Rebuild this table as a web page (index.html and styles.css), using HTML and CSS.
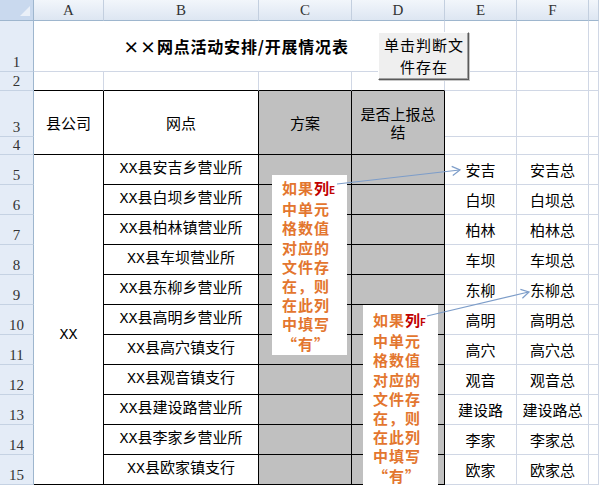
FILE: index.html
```html
<!DOCTYPE html>
<html lang="zh-CN">
<head>
<meta charset="utf-8">
<title>××网点活动安排/开展情况表</title>
<link rel="stylesheet" href="styles.css">
</head>
<body>
<div class="sheet">
  <table class="grid">
    <colgroup>
      <col class="c-rh"><col class="c-a"><col class="c-b"><col class="c-c"><col class="c-d"><col class="c-e"><col class="c-f"><col class="c-g">
    </colgroup>
    <tr class="r-hdr">
      <th class="corner"><span class="tri"></span></th>
      <th class="ch">A</th><th class="ch">B</th><th class="ch">C</th><th class="ch">D</th><th class="ch">E</th><th class="ch">F</th><th class="ch"></th>
    </tr>
    <tr class="r1">
      <th class="rh">1</th>
      <td colspan="4" class="title">××网点活动安排/开展情况表</td>
      <td></td><td></td><td></td>
    </tr>
    <tr class="r2">
      <th class="rh">2</th>
      <td class="bb"></td><td class="bb"></td><td class="bb"></td><td class="bb"></td>
      <td></td><td></td><td></td>
    </tr>
    <tr class="r3">
      <th class="rh">3</th>
      <td rowspan="2" class="box">县公司</td>
      <td rowspan="2" class="box">网点</td>
      <td rowspan="2" class="box gray">方案</td>
      <td rowspan="2" class="box gray wrap">是否上报总结</td>
      <td></td><td></td><td></td>
    </tr>
    <tr class="r4">
      <th class="rh">4</th>
      <td></td><td></td><td></td>
    </tr>
    <tr class="r">
      <th class="rh">5</th>
      <td rowspan="11" class="box mono county">XX</td>
      <td class="box mono">XX县安吉乡营业所</td><td class="box gray"></td><td class="box gray"></td>
      <td>安吉</td><td>安吉总</td><td></td>
    </tr>
    <tr class="r">
      <th class="rh">6</th>
      <td class="box mono">XX县白坝乡营业所</td><td class="box gray"></td><td class="box gray"></td>
      <td>白坝</td><td>白坝总</td><td></td>
    </tr>
    <tr class="r">
      <th class="rh">7</th>
      <td class="box mono">XX县柏林镇营业所</td><td class="box gray"></td><td class="box gray"></td>
      <td>柏林</td><td>柏林总</td><td></td>
    </tr>
    <tr class="r">
      <th class="rh">8</th>
      <td class="box mono">XX县车坝营业所</td><td class="box gray"></td><td class="box gray"></td>
      <td>车坝</td><td>车坝总</td><td></td>
    </tr>
    <tr class="r">
      <th class="rh">9</th>
      <td class="box mono">XX县东柳乡营业所</td><td class="box gray"></td><td class="box gray"></td>
      <td>东柳</td><td>东柳总</td><td></td>
    </tr>
    <tr class="r">
      <th class="rh">10</th>
      <td class="box mono">XX县高明乡营业所</td><td class="box gray"></td><td class="box gray"></td>
      <td>高明</td><td>高明总</td><td></td>
    </tr>
    <tr class="r">
      <th class="rh">11</th>
      <td class="box mono">XX县高穴镇支行</td><td class="box gray"></td><td class="box gray"></td>
      <td>高穴</td><td>高穴总</td><td></td>
    </tr>
    <tr class="r">
      <th class="rh">12</th>
      <td class="box mono">XX县观音镇支行</td><td class="box gray"></td><td class="box gray"></td>
      <td>观音</td><td>观音总</td><td></td>
    </tr>
    <tr class="r">
      <th class="rh">13</th>
      <td class="box mono">XX县建设路营业所</td><td class="box gray"></td><td class="box gray"></td>
      <td>建设路</td><td>建设路总</td><td></td>
    </tr>
    <tr class="r">
      <th class="rh">14</th>
      <td class="box mono">XX县李家乡营业所</td><td class="box gray"></td><td class="box gray"></td>
      <td>李家</td><td>李家总</td><td></td>
    </tr>
    <tr class="r">
      <th class="rh">15</th>
      <td class="box mono">XX县欧家镇支行</td><td class="box gray"></td><td class="box gray"></td>
      <td>欧家</td><td>欧家总</td><td></td>
    </tr>
  </table>

  <button class="btn" type="button">单击判断文<br>件存在</button>

  <div class="note note-e">如果<span class="key">列<small>E</small></span><br>中单元<br>格数值<br>对应的<br>文件存<br>在，则<br>在此列<br>中填写<br>“有”</div>
  <div class="note note-f">如果<span class="key">列<small>F</small></span><br>中单元<br>格数值<br>对应的<br>文件存<br>在，则<br>在此列<br>中填写<br>“有”</div>

  <svg class="arrows" width="599" height="485" viewBox="0 0 599 485">
    <line x1="337" y1="184" x2="459.5" y2="170" />
    <polyline points="452.8,175.4 460,170 451.7,166.4" />
    <line x1="427" y1="316" x2="528.5" y2="292" />
    <polyline points="522.4,298.2 529,292 520.4,289.4" />
  </svg>
</div>
</body>
</html>
```
FILE: styles.css
```css
* { box-sizing: border-box; }
html, body { margin: 0; padding: 0; }
body {
  width: 599px;
  height: 485px;
  overflow: hidden;
  background: #fff;
  font-family: "Noto Sans CJK SC", sans-serif;
  color: #000;
}
.sheet {
  position: relative;
  width: 599px;
  height: 485px;
  overflow: hidden;
}
.grid {
  border-collapse: separate;
  border-spacing: 0;
  table-layout: fixed;
  width: 599px;
}
.c-rh { width: 34px; }
.c-a { width: 70px; }
.c-b { width: 155px; }
.c-c { width: 93px; }
.c-d { width: 93px; }
.c-e { width: 72px; }
.c-f { width: 72px; }
.c-g { width: 10px; }

.grid td, .grid th {
  padding: 0;
  border-right: 1px solid #d0d7e5;
  border-bottom: 1px solid #d0d7e5;
  font-weight: normal;
  text-align: center;
  vertical-align: middle;
  white-space: nowrap;
  overflow: hidden;
  font-size: 15px;
  line-height: 18px;
}
.r-hdr { height: 21px; }
.r1 { height: 51px; }
.r2 { height: 19px; }
.r3 { height: 46px; }
.r4 { height: 18px; }
.r { height: 30px; }

.grid .corner {
  position: relative;
  background: #c9d9ee;
  border-right-color: #9eb6ce;
  border-bottom-color: #9eb6ce;
}
.tri {
  position: absolute;
  right: 3px;
  bottom: 4px;
  width: 0;
  height: 0;
  border-left: 10px solid transparent;
  border-bottom: 10px solid #eaf0f8;
}
.grid .ch {
  background: linear-gradient(#f2f6fb, #dde6f2);
  border-right-color: #c3cfdf;
  border-bottom-color: #9eb6ce;
  font-family: "Liberation Serif", serif;
  font-size: 15px;
  color: #333;
}
.grid .rh {
  background: #e4ecf7;
  border-right-color: #9eb6ce;
  border-bottom-color: #c5d2e3;
  font-family: "Liberation Serif", serif;
  font-size: 15px;
  line-height: 16px;
  color: #333;
  vertical-align: bottom;
  padding-bottom: 1px;
}
.grid .title {
  font-weight: bold;
  font-size: 16px;
  letter-spacing: 0.8px;
  padding-right: 6px;
}
.grid .bb { border-bottom-color: #000; }
.grid .box {
  border-right-color: #000;
  border-bottom-color: #000;
}
.grid .gray { background: #c0c0c0; }
.grid .wrap {
  white-space: normal;
  padding: 0 6px;
  line-height: 18px;
}
.grid .mono {
  font-family: "Liberation Mono", "Noto Sans CJK SC", monospace;
}
.grid .county {
  padding-top: 32px;
}

.btn {
  position: absolute;
  left: 378px;
  top: 32px;
  width: 91px;
  height: 48px;
  margin: 0;
  padding: 0 0 0 1px;
  background: #efefef;
  border: 1px solid;
  border-color: #ffffff #5a5a5a #5a5a5a #ffffff;
  box-shadow: inset -1px -1px 0 #a0a0a0, 1px 1px 0 #c8c8c8;
  font-family: "Noto Sans CJK SC", sans-serif;
  font-size: 15px;
  line-height: 22px;
  letter-spacing: 1px;
  color: #000;
  text-align: center;
}

.note {
  position: absolute;
  width: 75px;
  background: #fff;
  padding: 3px 0 0 10px;
  font-family: "Noto Sans CJK SC", sans-serif;
  font-weight: bold;
  font-size: 15px;
  line-height: 19.2px;
  letter-spacing: 1px;
  color: #e3762f;
  white-space: nowrap;
}
.note-e { left: 272px; top: 175px; height: 180px; }
.note-f { left: 363px; top: 305px; height: 190px; padding-top: 5px; }
.key { color: #c00000; letter-spacing: 0; }
.key small { font-size: 10px; letter-spacing: 0; }

.arrows {
  position: absolute;
  left: 0;
  top: 0;
  pointer-events: none;
}
.arrows line, .arrows polyline {
  fill: none;
  stroke: #7d9dc9;
  stroke-width: 1.2;
}
```
